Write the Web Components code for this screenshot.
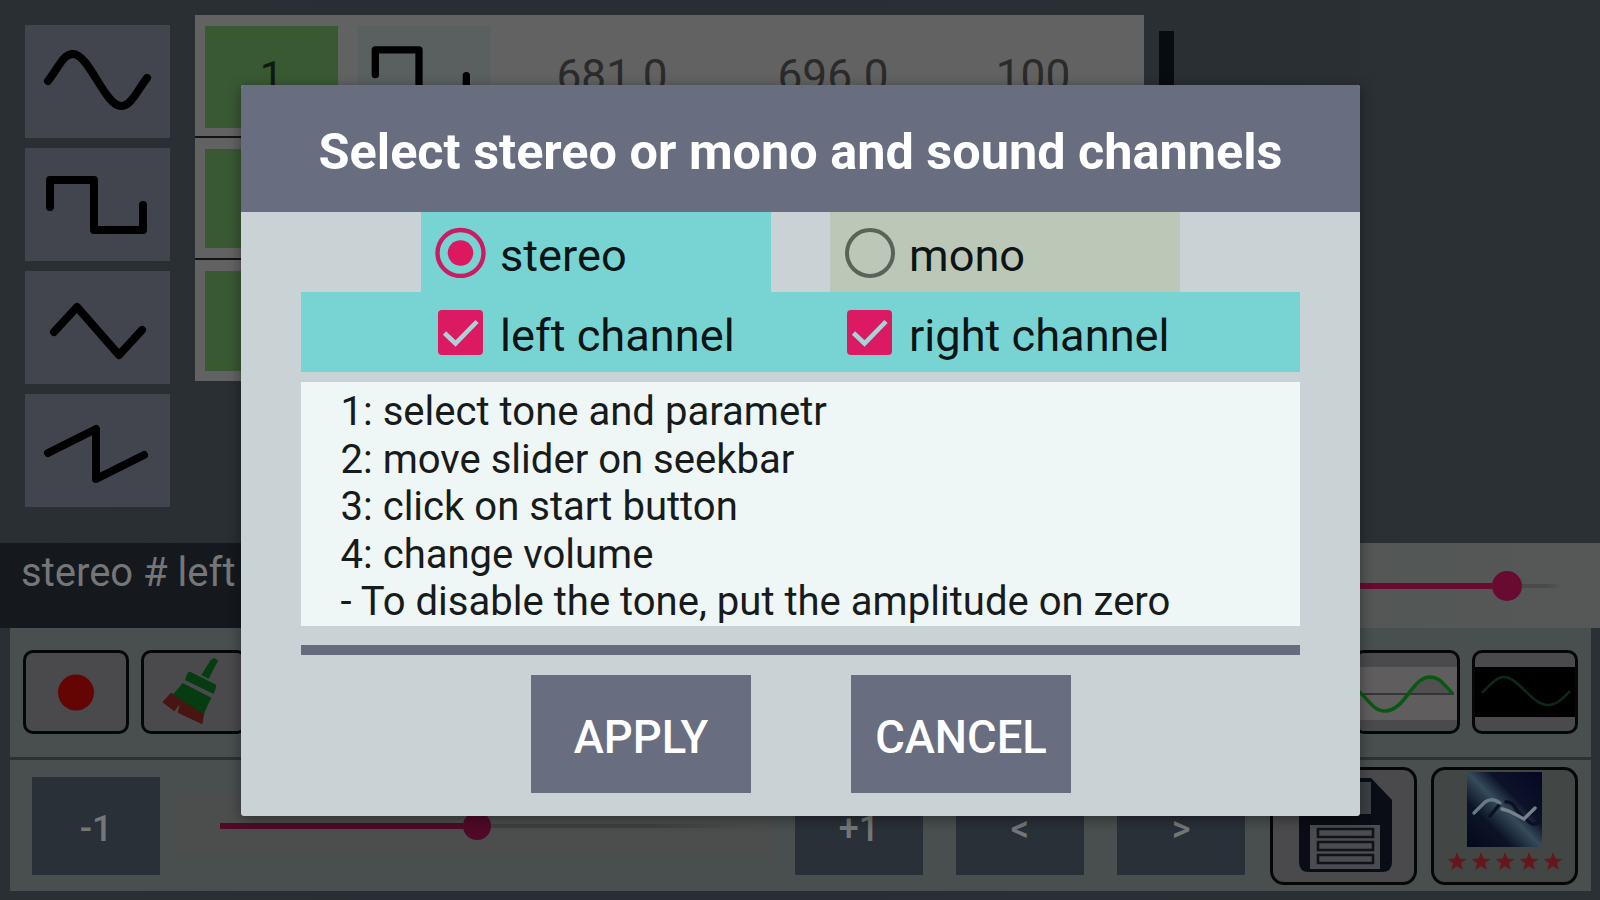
<!DOCTYPE html>
<html lang="en">
<head>
    <meta charset="utf-8">
    <title>Tone generator</title>
    <style>
        body {
            margin: 0;
            width: 1600px;
            height: 900px;
            overflow: hidden;
            font-family: Roboto, "Liberation Sans", sans-serif;
        }
    </style>

    <!-- wave button, the wave shape comes from the "wave" attribute -->
    <template id="wave-icon">
        <style>
            :host { display: block; }
            svg { display: block; width: 100%; height: 100%; }
            path {
                fill: none;
                stroke: #000;
                stroke-width: 8;
                stroke-linecap: round;
                stroke-linejoin: round;
            }
        </style>
        <svg viewBox="0 0 145 113" preserveAspectRatio="none"><path/></svg>
    </template>

    <template id="tone-row">
        <style>
            :host {
                display: grid;
                grid-template-columns: 133px 132px 1fr;
                column-gap: 20px;
                box-sizing: border-box;
                height: 122.5px;
                padding: 11px 10px 10px 10px;
                border-bottom: 2px solid #141414;
            }
            :host(:last-of-type) { height: 120.5px; border-bottom: 0; }
            .num { background: #395933; color: #10190f; font-size: 42px; line-height: 102px; text-align: center; }
            .wave { background: #59605f; }
            .values { display: grid; grid-template-columns: 220px 222px 178px; color: #2b2b2b; font-size: 44.2px; line-height: 101px; text-align: center; margin-left: -8px; }
        </style>
        <div class="num"><slot name="num"></slot></div>
        <div class="wave"><slot name="wave"></slot></div>
        <div class="values"><slot></slot></div>
    </template>

    <template id="seek-bar">
        <style>
            :host { display: flex; align-items: center; }
            .done { height: 6px; background: var(--accent, #5e0a2d); width: var(--done); }
            .thumb { width: var(--thumb, 30px); height: var(--thumb, 30px); border-radius: 50%; background: var(--accent, #5e0a2d); flex: none; }
            .rest { height: 4px; background: linear-gradient(90deg, var(--rest-color, #454949) 60%, transparent); width: var(--rest); }
        </style>
        <div class="done"></div><div class="thumb"></div><div class="rest"></div>
    </template>

    <template id="tool-button">
        <style>
            :host {
                display: block;
                box-sizing: border-box;
                border: 3px solid #050707;
                border-radius: 10px;
                background: #4a4a4d;
                overflow: hidden;
                flex: none;
            }
        </style>
        <slot></slot>
    </template>

    <template id="step-button">
        <style>
            :host {
                display: block;
                flex: none;
                width: 128px;
                height: 98px;
                background: #2a3037;
                color: #747678;
                font-size: 36px;
                font-weight: 500;
                line-height: 104px;
                text-align: center;
            }
        </style>
        <slot></slot>
    </template>

    <template id="choice-item">
        <style>
            :host {
                display: flex;
                align-items: center;
                box-sizing: border-box;
                width: 350px;
                height: 80px;
                padding-left: 14px;
                color: #0c1415;
                font-size: 45.2px;
                flex: none;
            }
            svg { width: 52px; height: 52px; flex: none; margin-right: 13px; }
            span { position: relative; top: 3px; white-space: nowrap; }
            g { display: none; }
            :host([type=radio][checked]) .radio-on,
            :host([type=radio]:not([checked])) .radio-off,
            :host([type=check]) .check { display: inline; }
        </style>
        <svg viewBox="0 0 52 52">
            <g class="radio-on">
                <circle cx="25.5" cy="27" r="23" fill="none" stroke="#cb1c63" stroke-width="4.4"/>
                <circle cx="25.5" cy="27" r="12.8" fill="#dc185f"/>
            </g>
            <g class="radio-off">
                <circle cx="26" cy="27" r="23" fill="none" stroke="#5a6358" stroke-width="4"/>
            </g>
            <g class="check">
                <rect x="3" y="4" width="45" height="45" rx="4" fill="#dc1a62"/>
                <path d="M9.5 27L20.5 37.5L42 15.5" fill="none" stroke="#a9d3da" stroke-width="4.6"/>
            </g>
        </svg>
        <span><slot></slot></span>
    </template>

    <template id="dialog-button">
        <style>
            :host {
                display: block;
                width: 220px;
                height: 118px;
                background: #696d80;
                color: #fff;
                font-size: 45.4px;
                font-weight: 500;
                line-height: 125px;
                text-align: center;
            }
        </style>
        <slot></slot>
    </template>

    <template id="channel-dialog">
        <style>
            :host {
                display: flex;
                flex-direction: column;
                position: absolute;
                left: 241px;
                top: 85px;
                width: 1119px;
                height: 731px;
                border-radius: 3px;
                background: #c9d2d4;
                box-shadow: 0 3px 14px rgba(0, 0, 0, .4);
                overflow: hidden;
            }
            header {
                height: 127px;
                background: #696d80;
                color: #fff;
                font-size: 50.4px;
                font-weight: 700;
                line-height: 133px;
                text-align: center;
                white-space: nowrap;
            }
            .row { display: flex; gap: 59px; padding-left: 120px; height: 80px; }
            main { padding: 0 60px; }
            .teal { background: #78d4d3; }
            .help {
                box-sizing: border-box;
                height: 244px;
                margin-top: 10px;
                padding: 6px 39.5px 0;
                background: #eff6f6;
                color: #171b1b;
                font-size: 40.07px;
                line-height: 47.5px;
                white-space: nowrap;
            }
            hr { height: 10px; margin: 19px 0 20px; border: 0; background: #666b7e; }
            footer { display: flex; gap: 100px; padding-left: 230px; }
        </style>
        <header><slot name="title"></slot></header>
        <main>
            <div class="row"><slot name="mode"></slot></div>
            <div class="row teal"><slot name="channel"></slot></div>
            <div class="help"><slot name="help"></slot></div>
            <hr>
            <footer><slot name="action"></slot></footer>
        </main>
    </template>

    <template id="tone-app">
        <style>
            :host {
                display: flex;
                flex-direction: column;
                position: relative;
                width: 1600px;
                height: 900px;
                background: linear-gradient(90deg, #2a2f33, #292e35 40%, #2b3034);
            }
            .top { display: flex; box-sizing: border-box; height: 543px; padding: 15px 0 0 25px; }
            .waves { display: flex; flex-direction: column; gap: 10px; padding-top: 10px; width: 145px; margin-right: 25px; }
            .waves wave-icon { height: 113px; background: #42454d; }
            .table { width: 949px; height: 366px; background: #626262; }
            .bar { width: 15px; height: 340px; margin: 16px 0 0 15px; background: #080c0e; }
            .status { display: flex; height: 85px; background: #15191e; color: #747678; }
            .status p { margin: 0; width: 700px; padding-left: 21px; font-size: 40px; line-height: 60px; box-sizing: border-box; }
            .status div { flex: 1; display: flex; background: linear-gradient(90deg, #4e5351, #555857); }
            .status seek-bar { margin-left: 100px; --done: 692px; --rest: 40px; --accent: #690a30; --rest-color: #474b4a; }
            .panel { margin: 0 9px 0 10px; background: #484f4e; display: flex; box-sizing: border-box; }
            .tools { height: 132px; padding: 22px 13px; gap: 12px; border-bottom: 3px solid #2b3235; }
            .tools tool-button { width: 106px; height: 84px; }
            .space { flex: 1; }
            .steps { height: 131px; padding: 0 13px 0 22px; align-items: flex-start; }
            .steps step-button { margin-top: 17px; }
            .level { box-sizing: border-box; width: 597px; height: 66px; margin: 33px 20px 0 18px; padding-left: 42px; display: flex; background: #4c4d4d; }
            .level seek-bar { --done: 243px; --rest: 262px; --thumb: 28px; --accent: #500a27; --rest-color: #3d4142; }
            .steps tool-button { width: 147px; height: 118px; margin-top: 7px; border-radius: 14px; }
            svg { display: block; }
        </style>
        <div class="top">
            <div class="waves">
                <wave-icon wave="sine"></wave-icon>
                <wave-icon wave="square"></wave-icon>
                <wave-icon wave="triangle"></wave-icon>
                <wave-icon wave="saw"></wave-icon>
            </div>
            <div class="table">
                <tone-row>
                    <span slot="num">1</span>
                    <wave-icon slot="wave" wave="pulse" style="height:100px"></wave-icon>
                    <span>681.0</span><span>696.0</span><span>100</span>
                </tone-row>
                <tone-row></tone-row>
                <tone-row></tone-row>
            </div>
            <div class="bar"></div>
        </div>
        <div class="status">
            <p>stereo # left</p>
            <div><seek-bar></seek-bar></div>
        </div>
        <div class="panel tools">
            <tool-button>
                <svg viewBox="0 0 100 78"><circle cx="50" cy="39.5" r="18" fill="#640503"/></svg>
            </tool-button>
            <tool-button>
                <!-- brush -->
                <svg viewBox="432 369 300 234">
                    <path d="M632 390q12-12 22 2l-28 54l-22-11z" fill="#063d10"/>
                    <path d="M572 426l72 36q8 6 3 14l-6 16l-86-42l7-20q4-7 10-4z" fill="#063d10"/>
                    <path d="M548 459l86 44l-24 50l-92-58z" fill="#063d10"/>
                    <path d="M513 488l101 54l-7 41l-74-35l6-25l-16 21l-36-27z" fill="#481512"/>
                    <path d="M535 485l85 46l-8 22l-92-58z" fill="#063d10"/>
                </svg>
            </tool-button>
            <div class="space"></div>
            <tool-button>
                <svg viewBox="0 0 100 78">
                    <path d="M0 14H100V67H0z" fill="#5f5d5d"/>
                    <path d="M49 40C58 31 63 25 73 25C83 25 88 33 96 41z" fill="#515050"/>
                    <path d="M0 41H97" stroke="#353535" stroke-width="2"/>
                    <path d="M-10 30C10 40 13 58 28 58C48 58 55 24 73 24C83 24 88 33 96 41" fill="none" stroke="#0a5712" stroke-width="3.5"/>
                </svg>
            </tool-button>
            <tool-button>
                <svg viewBox="0 0 100 78">
                    <path d="M0 14H100V64H0z" fill="#000"/>
                    <path d="M7 40C14 33 21 24 29 24C43 24 57 52 73 52C83 52 90 43 95 38" fill="none" stroke="#0b2a17" stroke-width="2.5"/>
                </svg>
            </tool-button>
        </div>
        <div class="panel steps">
            <step-button>-1</step-button>
            <div class="level"><seek-bar></seek-bar></div>
            <step-button>+1</step-button>
            <step-button style="margin-left:33px">&lt;</step-button>
            <step-button style="margin-left:33px">&gt;</step-button>
            <div class="space"></div>
            <tool-button style="margin-right:14px">
                <!-- floppy disk -->
                <svg width="142" height="112" viewBox="1272 770 142 112">
                    <path d="M1308 778h62l21 22v62q0 10-10 10h-73q-10 0-10-10v-74q0-10 10-10z" fill="#0a0d15"/>
                    <path d="M1322 782h48v32h-48z" fill="#3b4042"/>
                    <path d="M1309 825h70v44h-70z" fill="#4a4c4f"/>
                    <path d="M1317 829h55v8h-55zM1317 842h55v8h-55zM1317 855h55v8h-55z" fill="#4b4d50" stroke="#10131a" stroke-width="2.6"/>
                </svg>
            </tool-button>
            <tool-button style="background:#424746">
                <svg width="142" height="112" viewBox="1433 770 142 112">
                    <defs>
                        <linearGradient id="sky" x1="0" y1="1" x2="1" y2="0">
                            <stop offset="0" stop-color="#04091a"/>
                            <stop offset=".3" stop-color="#0b1426"/>
                            <stop offset=".5" stop-color="#364b5a"/>
                            <stop offset=".65" stop-color="#0d1229"/>
                            <stop offset="1" stop-color="#050720"/>
                        </linearGradient>
                    </defs>
                    <path d="M1466 772h75v75h-75z" fill="url(#sky)"/>
                    <g fill="none" stroke-width="3.4" stroke-linecap="round">
                        <path d="M1489 816L1498 805M1505 802Q1511 801 1515 809L1521 816M1526 820Q1532 827 1538 822" stroke="#0b1122"/>
                        <path d="M1473 813L1484 802Q1491 797 1499 803" stroke="#697985"/>
                        <path d="M1501 809L1508 811L1523 819L1534 808" stroke="#76838d"/>
                    </g>
                    <g id="stars" fill="#64181d"></g>
                </svg>
            </tool-button>
        </div>
        <slot></slot>
    </template>
</head>
<body>

<tone-app>
    <channel-dialog>
        <span slot="title">Select stereo or mono and sound channels</span>
        <choice-item slot="mode" type="radio" checked style="background:#78d4d3">stereo</choice-item>
        <choice-item slot="mode" type="radio" style="background:#bcc8b7">mono</choice-item>
        <choice-item slot="channel" type="check">left channel</choice-item>
        <choice-item slot="channel" type="check">right channel</choice-item>
        <div slot="help">1: select tone and parametr</div>
        <div slot="help">2: move slider on seekbar</div>
        <div slot="help">3: click on start button</div>
        <div slot="help">4: change volume</div>
        <div slot="help">- To disable the tone, put the amplitude on zero</div>
        <dialog-button slot="action">APPLY</dialog-button>
        <dialog-button slot="action">CANCEL</dialog-button>
    </channel-dialog>
</tone-app>

<script>
    const WAVES = {
        sine: 'M23 56C34 42 38 29 48 29C64 29 80 81 96 81C106 81 112 66 122 53',
        square: 'M25 59V32H69V82H118V57',
        // square wave as the table cell shows it
        pulse: 'M19 55V27H67V88H119V56',
        triangle: 'M29 61L52 36L94 84L117 59',
        saw: 'M23 59L71 35V85L119 61'
    };

    // every element only clones the template with its own name
    class TemplateElement extends HTMLElement {
        constructor() {
            super();
            const template = document.getElementById(this.localName);
            this.attachShadow({mode: 'open'}).appendChild(template.content.cloneNode(true));
        }
    }

    class WaveIcon extends TemplateElement {
        connectedCallback() {
            this.shadowRoot.querySelector('path').setAttribute('d', WAVES[this.getAttribute('wave')]);
        }
    }

    class ToneApp extends TemplateElement {
        connectedCallback() {
            // five rating stars
            const stars = this.shadowRoot.getElementById('stars');
            for (const cx of [1456, 1480, 1504, 1528, 1552]) {
                const points = [];
                for (let i = 0; i < 10; i++) {
                    const r = i % 2 ? 4.2 : 10;
                    const a = Math.PI * (i / 5 - 0.5);
                    points.push((cx + r * Math.cos(a)).toFixed(1) + ',' + (862 + r * Math.sin(a)).toFixed(1));
                }
                const star = document.createElementNS('http://www.w3.org/2000/svg', 'polygon');
                star.setAttribute('points', points.join(' '));
                stars.appendChild(star);
            }
        }
    }

    customElements.define('wave-icon', WaveIcon);
    for (const name of ['tone-row', 'seek-bar', 'tool-button', 'step-button', 'choice-item', 'dialog-button', 'channel-dialog']) {
        customElements.define(name, class extends TemplateElement {});
    }
    customElements.define('tone-app', ToneApp);
</script>
</body>
</html>
